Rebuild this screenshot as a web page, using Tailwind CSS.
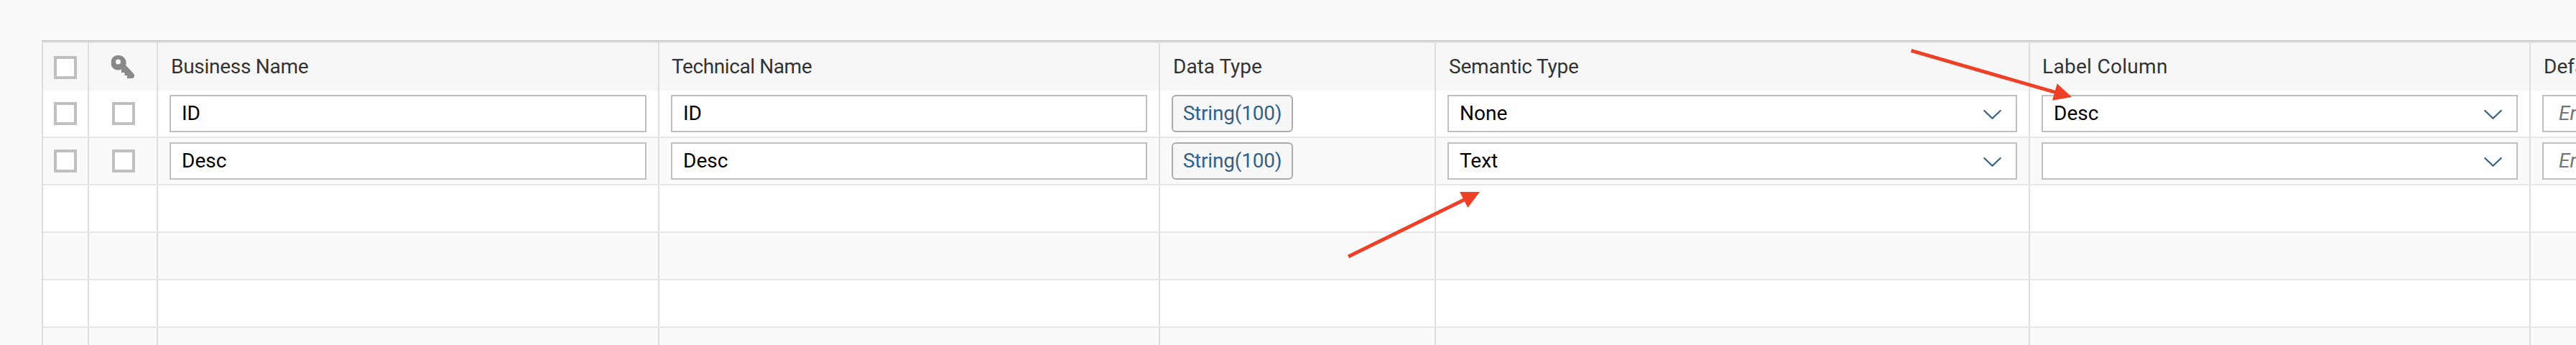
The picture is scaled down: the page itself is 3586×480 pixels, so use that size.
<!DOCTYPE html>
<html lang="en">
<head>
    <meta charset="UTF-8">
    <meta name="viewport" content="width=device-width, initial-scale=1.0">
    <title>Columns</title>
    <script src="https://cdn.jsdelivr.net/npm/@tailwindcss/browser@4"></script>
</head>
<body class="bg-[#fafafa] overflow-hidden">
    <div class="relative h-[480px] w-[3586px] overflow-hidden pt-14 pl-[58px] font-[Roboto,sans-serif] text-[28px] leading-8 text-black">
        <!-- Top border of the table -->
        <div class="h-1 border-t-2 border-[#c9c9c9] bg-[#e5e5e5]"></div>

        <div id="table" class="w-[3800px] border-l-2 border-[#dddddd]">
            <!-- Header -->
            <div class="grid h-[66px] grid-cols-[64px_96px_698px_697px_384px_827px_697px_1fr] bg-[#f7f7f7] text-[#333333]">
                <div class="flex items-center justify-center border-r-2 border-[#dddddd] pt-0.5"><span class="size-8 border-4 border-[#bfbfbf] bg-white"></span></div>
                <div class="flex items-center justify-center border-r-2 border-[#dddddd]">
                    <svg class="size-8" viewBox="0 0 32 32" fill="#888888">
                        <path fill-rule="evenodd" d="M10.500 0a10.300 10.300 0 0 1 9.500 13.800L31 25.500q1.200 1.500 1 3.500-.5 3-3.500 3H22v-4h-3.500v-4H14v-4.500A10.300 10.300 0 1 1 10.500 0ZM9.500 5.500a3.500 3.500 0 1 0 0 7 3.500 3.500 0 0 0 0-7Z"/>
                    </svg>
                </div>
                <div class="flex items-center border-r-2 border-[#dddddd] pl-[18px] tracking-[-0.27px]">Business Name</div>
                <div class="flex items-center border-r-2 border-[#dddddd] pl-[17px] tracking-[-0.4px]">Technical Name</div>
                <div class="flex items-center border-r-2 border-[#dddddd] pl-[18px]">Data Type</div>
                <div class="flex items-center border-r-2 border-[#dddddd] pl-[18px] tracking-[-0.2px]">Semantic Type</div>
                <div class="flex items-center border-r-2 border-[#dddddd] pl-[17px] tracking-[0.3px]">Label Column</div>
                <div class="flex items-center pl-[18px]">Default Value</div>
            </div>
        </div>

        <!-- Arrows -->
        <svg class="absolute top-0 left-0 h-[480px] w-[3586px]" fill="#ee4026" stroke="#ee4026">
            <path stroke-width="5" d="M2660.500 70.300L2862 128.700"/>
            <path stroke="none" d="M2884 135L2863.700 116.300L2857 139.700Z"/>
            <path stroke-width="5" d="M1877 357L2040 277"/>
            <path stroke="none" d="M2060 267L2032 267L2043.300 289Z"/>
        </svg>
    </div>

    <script>
        // Empty rows fill up the rest of the table
        const rows = [
            { name: 'ID', type: 'String(100)', semantic: 'None', label: 'Desc' },
            { name: 'Desc', type: 'String(100)', semantic: 'Text', label: '' },
            null,
            null,
            null,
            null
        ];

        const checkbox = '<span class="size-8 border-4 border-[#bfbfbf] bg-white"></span>';
        const chevron = '<svg class="ml-auto h-4 w-[26px]" viewBox="0 0 26 16" fill="none" stroke="#346187" stroke-width="2.2" stroke-linecap="round" stroke-linejoin="round"><path d="M2.300 4L13.500 14.800L24.700 4"/></svg>';

        const input = text => `<div class="flex h-[52px] w-full items-center border-2 border-[#bfbfbf] bg-white pl-[15px]">${text}</div>`;
        const select = text => `<div class="flex h-[52px] w-full items-center border-2 border-[#bfbfbf] bg-white pr-5 pl-[15px]">${text}${chevron}</div>`;
        const button = text => `<div class="flex h-[52px] w-[169px] items-center justify-center rounded-md border-2 border-[#ababab] bg-[#f7f7f7] tracking-[-0.2px] text-[#346187]">${text}</div>`;
        const placeholder = '<div class="flex h-[52px] w-full items-center border-2 border-[#bfbfbf] bg-white pl-[21px] text-[#757575] italic">Enter</div>';

        rows.forEach((row, index) => {
            const div = document.createElement('div');
            div.className = 'grid h-[66px] grid-cols-[64px_96px_698px_697px_384px_827px_697px_1fr] border-b-2 border-[#e5e5e5]';
            div.classList.add(index % 2 ? 'bg-[#fafafa]' : 'bg-white');

            const cells = row
                ? [checkbox, checkbox, input(row.name), input(row.name), button(row.type), select(row.semantic), select(row.label), placeholder]
                : ['', '', '', '', '', '', '', ''];

            cells.forEach((content, i) => {
                const cell = document.createElement('div');
                cell.className = 'flex items-center border-r-2 border-[#dddddd]';
                if (i === 0) cell.classList.add('justify-center');
                else if (i === 1) cell.classList.add('justify-center', 'pl-0.5');
                else cell.classList.add('px-4');
                cell.innerHTML = content;
                div.appendChild(cell);
            });
            document.getElementById('table').appendChild(div);
        });
    </script>
</body>
</html>
